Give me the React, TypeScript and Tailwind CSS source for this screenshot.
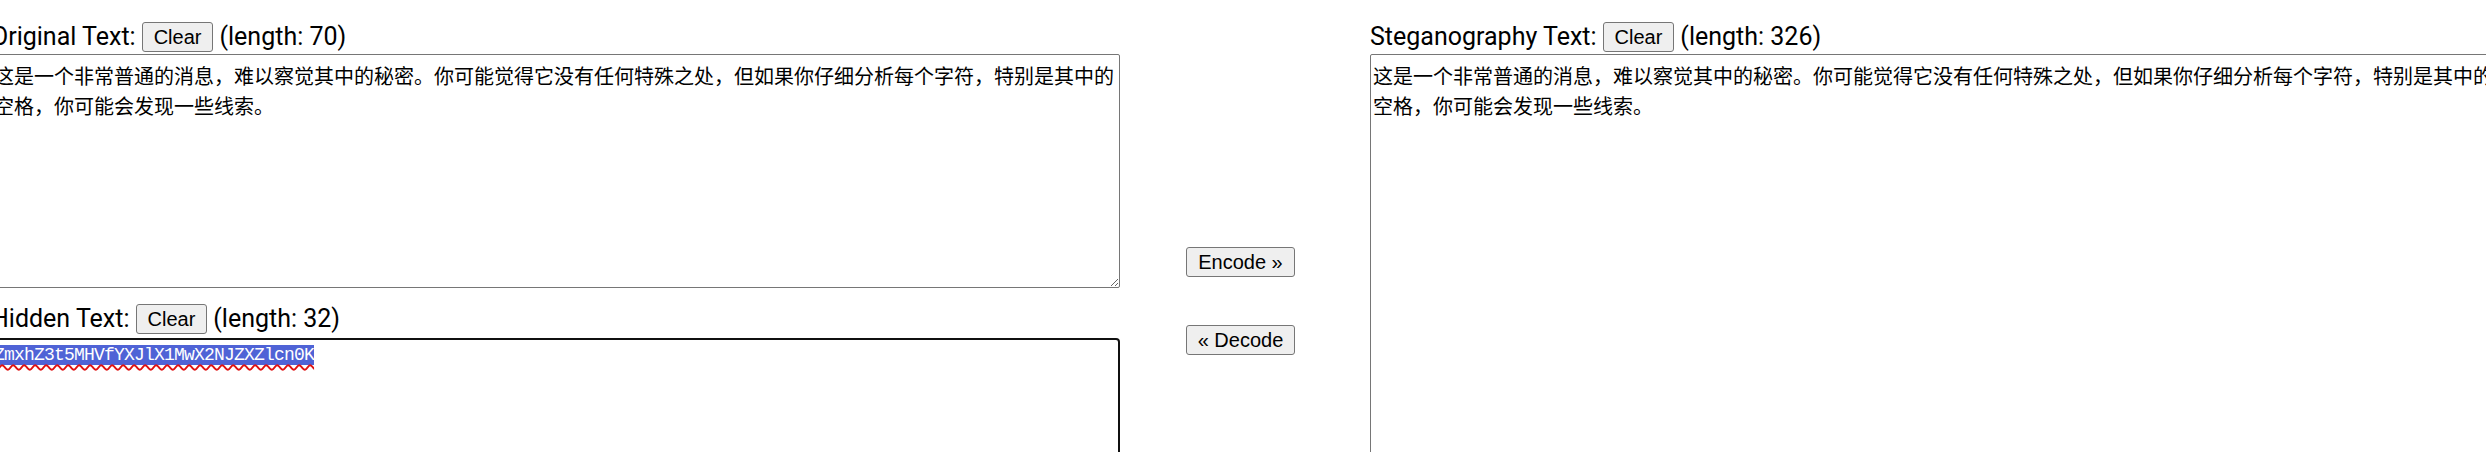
import React from "react";

const original =
  "这是一个非常普通的消息，难以察觉其中的秘密。你可能觉得它没有任何特殊之处，但如果你仔细分析每个字符，特别是其中的空格，你可能会发现一些线索。";

const hidden = "ZmxhZ3t5MHVfYXJlX1MwX2NJZXZlcn0K";

function ClearButton() {
  return (
    <button
      type="button"
      className="h-[30px] px-[11px] border border-[#767676] rounded-[3px] bg-[#efefef] text-black text-[20px] leading-none font-['Liberation_Sans',Arial,sans-serif]"
    >
      Clear
    </button>
  );
}

function LabelRow({ label, length }: { label: string; length: number }) {
  return (
    <div className="flex items-center gap-[6px] h-[30px] whitespace-nowrap text-[25px] text-black font-['Roboto',sans-serif]">
      <span>{label}</span>
      <ClearButton />
      <span>(length: {length})</span>
    </div>
  );
}

export default function App() {
  return (
    <div className="w-[2486px] h-[452px] overflow-hidden bg-white relative">
      <div className="flex items-start ml-[-9px] pt-[22px] w-[2600px]">
        {/* Left column */}
        <div className="flex flex-col w-[1129px] shrink-0">
          <LabelRow label="Original Text:" length={70} />
          <textarea
            readOnly
            value={original}
            className="mt-[2px] h-[234px] w-full border border-[#767676] rounded-[2px] pl-[2px] pt-[6px] pr-[2px] text-[20px] leading-[30px] text-black bg-white font-['Noto_Sans_CJK_SC',sans-serif] outline-none"
          />
          <div className="mt-[16px]">
            <LabelRow label="Hidden Text:" length={32} />
          </div>
          <div className="mt-[4px] h-[300px] w-full border-2 border-[#101010] rounded-[4px] pl-[1px] pt-[2px] bg-white">
            <span className="bg-[#4f63d6] text-white text-[18px] tracking-[-0.8px] leading-[20px] inline-block h-[20px] font-['Liberation_Mono',monospace] underline decoration-wavy decoration-[#e01010] decoration-[1.5px] underline-offset-[4px]">
              {hidden}
            </span>
          </div>
        </div>

        {/* Middle column */}
        <div className="flex flex-col items-center w-[241px] shrink-0 pt-[225px] gap-[48px]">
          <button
            type="button"
            className="h-[30px] px-[11px] border border-[#767676] rounded-[3px] bg-[#efefef] text-black text-[20px] leading-none whitespace-nowrap font-['Liberation_Sans',Arial,sans-serif]"
          >
            Encode »
          </button>
          <button
            type="button"
            className="h-[30px] px-[11px] border border-[#767676] rounded-[3px] bg-[#efefef] text-black text-[20px] leading-none whitespace-nowrap font-['Liberation_Sans',Arial,sans-serif]"
          >
            « Decode
          </button>
        </div>

        {/* Right column */}
        <div className="flex flex-col w-[1129px] shrink-0 ml-[9px]">
          <LabelRow label="Steganography Text:" length={326} />
          <textarea
            readOnly
            value={original}
            className="mt-[2px] h-[500px] w-full border border-[#767676] rounded-[2px] pl-[2px] pt-[6px] pr-[2px] text-[20px] leading-[30px] text-black bg-white font-['Noto_Sans_CJK_SC',sans-serif] outline-none"
          />
        </div>
      </div>
    </div>
  );
}
